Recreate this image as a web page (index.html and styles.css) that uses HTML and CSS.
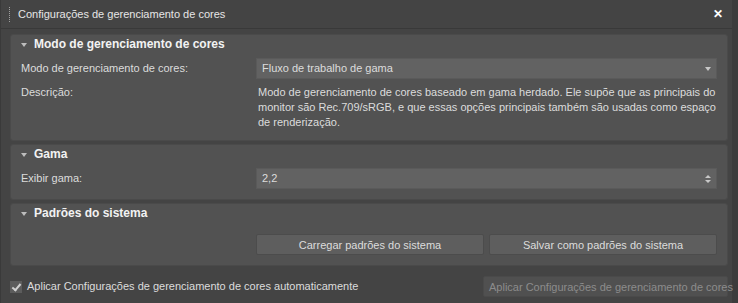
FILE: index.html
```html
<!DOCTYPE html>
<html lang="pt">
<head>
  <meta charset="UTF-8">
  <title>Configurações de gerenciamento de cores</title>
  <link rel="stylesheet" href="styles.css">
</head>
<body>
  <div class="window">
    <!-- barra de título -->
    <div class="titlebar">
      <span class="grip"></span>
      <span class="title">Configurações de gerenciamento de cores</span>
      <span class="close">&#x2715;</span>
    </div>

    <div class="content">
      <div class="panel">
        <div class="panel-head"><span class="arrow"></span>Modo de gerenciamento de cores</div>
        <div class="row">
          <label>Modo de gerenciamento de cores:</label>
          <div class="field select">Fluxo de trabalho de gama<span class="caret"></span></div>
        </div>
        <div class="row desc-row">
          <label>Descrição:</label>
          <div class="desc">Modo de gerenciamento de cores baseado em gama herdado. Ele supõe que as principais do<br>monitor são Rec.709/sRGB, e que essas opções principais também são usadas como espaço<br>de renderização.</div>
        </div>
      </div>

      <div class="panel">
        <div class="panel-head"><span class="arrow"></span>Gama</div>
        <div class="row">
          <label>Exibir gama:</label>
          <div class="field spinner">2,2<span class="spin"><i class="up"></i><i class="down"></i></span></div>
        </div>
      </div>

      <div class="panel">
        <div class="panel-head"><span class="arrow"></span>Padrões do sistema</div>
        <div class="row">
          <label></label>
          <div class="buttons">
            <button class="btn">Carregar padrões do sistema</button>
            <button class="btn">Salvar como padrões do sistema</button>
          </div>
        </div>
      </div>
    </div>

    <div class="footer">
      <label class="check"><span class="box"></span>Aplicar Configurações de gerenciamento de cores automaticamente</label>
      <button class="btn disabled">Aplicar Configurações de gerenciamento de cores</button>
    </div>
  </div>
</body>
</html>
```

FILE: styles.css
```css
body {
  margin: 0;
  background: #3c3c3c;
  font-family: 'Liberation Sans', Arial, sans-serif;
  font-size: 11px;
  line-height: 15px;
  color: #dcdcdc;
}
.window {
  width: 732px;
  height: 303px;
  background: #444444;
  box-sizing: border-box;
  border-left: 1px solid #3a3a3a;
}
.titlebar {
  height: 28px;
  border-bottom: 1px solid #393939;
  display: flex;
  align-items: center;
  padding: 0 9px 0 8px;
}
.grip {
  width: 2px;
  height: 15px;
  border-left: 1px dotted #a0a0a0;
  margin-right: 6px;
}
.title {
  flex: 1;
  color: #e6e6e6;
}
.close {
  color: #fff;
  font-size: 12px;
  font-weight: bold;
}
.content {
  padding: 5px 4px 0 9px;
  display: flex;
  flex-direction: column;
  gap: 3px;
}
.panel {
  background: #525252;
  border: 1px solid #4a4a4a;
  border-radius: 3px;
  padding: 0 10px 10px 10px;
}
.panel-head {
  height: 19px;
  display: flex;
  align-items: center;
  font-weight: bold;
  font-size: 12px;
  color: #f2f2f2;
}
.arrow {
  width: 0;
  height: 0;
  border-left: 3px solid transparent;
  border-right: 3px solid transparent;
  border-top: 4px solid #bdbdbd;
  margin: 0 7px 0 0;
}
.row {
  display: grid;
  grid-template-columns: 235px 1fr;
  align-items: center;
  margin-top: 4px;
}
.row label {
  white-space: nowrap;
}
.field {
  height: 21px;
  box-sizing: border-box;
  background: #626262;
  border: 1px solid #5a5a5a;
  display: flex;
  align-items: center;
  padding: 0 5px;
}
.caret {
  margin-left: auto;
  border-left: 3px solid transparent;
  border-right: 3px solid transparent;
  border-top: 4px solid #c8c8c8;
}
.spin {
  margin-left: auto;
  display: flex;
  flex-direction: column;
  gap: 2px;
}
.spin i {
  border-left: 3px solid transparent;
  border-right: 3px solid transparent;
}
.spin .up { border-bottom: 3px solid #c8c8c8; }
.spin .down { border-top: 3px solid #c8c8c8; }
.desc-row {
  align-items: start;
  margin-top: 6px;
}
.desc {
  padding-left: 2px;
  white-space: nowrap;
}
.buttons {
  display: grid;
  grid-template-columns: 1fr 1fr;
  gap: 5px;
  margin-top: 7px;
}
.btn {
  height: 21px;
  background: #5e5e5e;
  border: 1px solid #4c4c4c;
  border-radius: 2px;
  color: #dcdcdc;
  font-family: inherit;
  font-size: 11px;
  padding: 0 5px;
  white-space: nowrap;
}
.footer {
  display: flex;
  align-items: center;
  justify-content: space-between;
  padding: 10px 4px 0 9px;
}
.check {
  display: flex;
  align-items: center;
}
.box {
  width: 12px;
  height: 12px;
  background: #5c5c5c;
  margin-right: 5px;
  position: relative;
}
.box::after {
  content: "";
  position: absolute;
  left: 4px;
  top: 1px;
  width: 3px;
  height: 7px;
  border: solid #d0d0d0;
  border-width: 0 2px 2px 0;
  transform: rotate(40deg);
}
.btn.disabled {
  background: #505050;
  border-color: #4a4a4a;
  color: #8c8c8c;
  width: 245px;
}
```
